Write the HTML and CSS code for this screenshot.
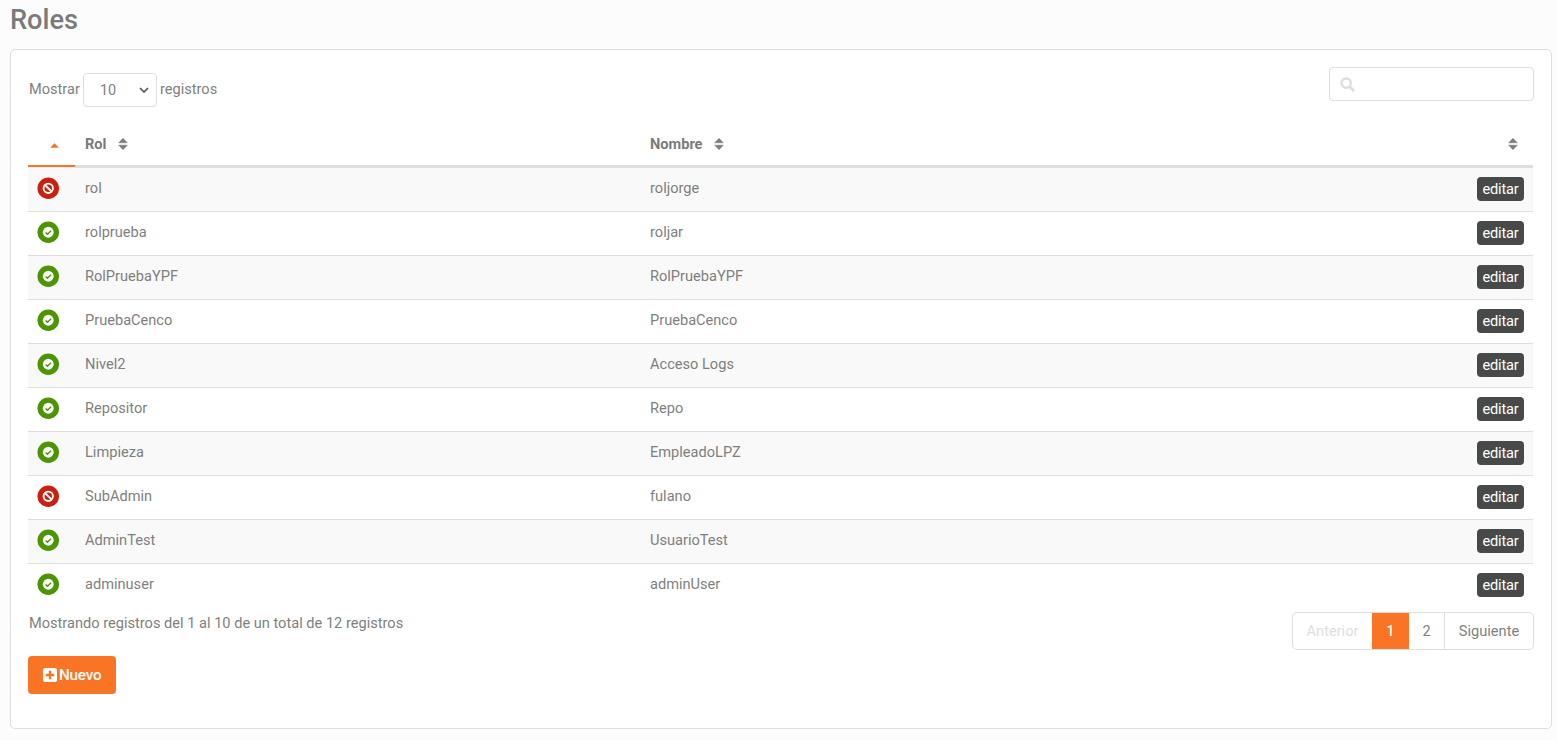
FILE: index.html
```html
<!DOCTYPE html>
<html lang="es">
<head>
<meta charset="utf-8">
<title>Roles</title>
<link rel="stylesheet" href="styles.css">
</head>
<body>
<svg class="defs" width="0" height="0" aria-hidden="true">
  <defs>
    <symbol id="ok" viewBox="0 0 24 24">
      <circle cx="12" cy="12" r="11.5" fill="#4b9500"/>
      <circle cx="12" cy="12" r="5.8" fill="#fff"/>
      <path d="M9.2 12.2l2 2 3.7-3.8" fill="none" stroke="#4b9500" stroke-width="1.4"/>
    </symbol>
    <symbol id="no" viewBox="0 0 24 24">
      <circle cx="12" cy="12" r="11.5" fill="#c9200f"/>
      <circle cx="12" cy="12" r="5" fill="none" stroke="#fff" stroke-width="2"/>
      <path d="M8.5 8.5l7 7" stroke="#fff" stroke-width="2"/>
    </symbol>
    <symbol id="sort" viewBox="0 0 10 12">
      <path d="M5 .3l4.3 4.5H.7zM5 11.7L.7 7.2h8.6z" fill="#7c7c7c" stroke="#7c7c7c" stroke-width=".5" stroke-linejoin="round"/>
    </symbol>
  </defs>
</svg>
<h1 class="title">Roles</h1>
<main class="card">
  <div class="top">
    <label class="length">Mostrar
      <span class="select">10
        <svg class="chev" viewBox="0 0 10 6" width="10" height="6"><path d="M1 1l4 4 4-4" fill="none" stroke="#555" stroke-width="1.7"/></svg>
      </span>
      registros</label>
    <div class="search">
      <svg viewBox="0 0 16 16" width="15" height="15"><circle cx="6.5" cy="6.5" r="5" fill="none" stroke="#dedede" stroke-width="2.6"/><path d="M10.5 10.5l4.5 4.5" stroke="#dedede" stroke-width="3"/></svg>
    </div>
  </div>
  <table class="grid">
    <colgroup><col class="c1"><col class="c2"><col class="c3"><col class="c4"></colgroup>
    <thead>
      <tr>
        <th class="sorted"><svg class="up" viewBox="0 0 10 5" width="9" height="5"><path d="M5 .4l4.2 4.2H.8z" fill="#f97425" stroke="#f97425" stroke-width=".6" stroke-linejoin="round"/></svg></th>
        <th>Rol<svg class="sort" width="10" height="12"><use href="#sort"/></svg></th>
        <th>Nombre<svg class="sort" width="10" height="12"><use href="#sort"/></svg></th>
        <th class="end"><svg class="sort" width="10" height="12"><use href="#sort"/></svg></th>
      </tr>
    </thead>
    <tbody>
      <tr><td class="st"><svg class="status"><use href="#no"/></svg></td><td>rol</td><td>roljorge</td><td class="end"><button class="edit">editar</button></td></tr>
      <tr><td class="st"><svg class="status"><use href="#ok"/></svg></td><td>rolprueba</td><td>roljar</td><td class="end"><button class="edit">editar</button></td></tr>
      <tr><td class="st"><svg class="status"><use href="#ok"/></svg></td><td>RolPruebaYPF</td><td>RolPruebaYPF</td><td class="end"><button class="edit">editar</button></td></tr>
      <tr><td class="st"><svg class="status"><use href="#ok"/></svg></td><td>PruebaCenco</td><td>PruebaCenco</td><td class="end"><button class="edit">editar</button></td></tr>
      <tr><td class="st"><svg class="status"><use href="#ok"/></svg></td><td>Nivel2</td><td>Acceso Logs</td><td class="end"><button class="edit">editar</button></td></tr>
      <tr><td class="st"><svg class="status"><use href="#ok"/></svg></td><td>Repositor</td><td>Repo</td><td class="end"><button class="edit">editar</button></td></tr>
      <tr><td class="st"><svg class="status"><use href="#ok"/></svg></td><td>Limpieza</td><td>EmpleadoLPZ</td><td class="end"><button class="edit">editar</button></td></tr>
      <tr><td class="st"><svg class="status"><use href="#no"/></svg></td><td>SubAdmin</td><td>fulano</td><td class="end"><button class="edit">editar</button></td></tr>
      <tr><td class="st"><svg class="status"><use href="#ok"/></svg></td><td>AdminTest</td><td>UsuarioTest</td><td class="end"><button class="edit">editar</button></td></tr>
      <tr><td class="st"><svg class="status"><use href="#ok"/></svg></td><td>adminuser</td><td>adminUser</td><td class="end"><button class="edit">editar</button></td></tr>
    </tbody>
  </table>
  <div class="foot">
    <div class="info">Mostrando registros del 1 al 10 de un total de 12 registros</div>
    <nav class="pager">
      <a class="pg prev">Anterior</a><a class="pg cur">1</a><a class="pg two">2</a><a class="pg next">Siguiente</a>
    </nav>
  </div>
  <button class="new">
    <svg viewBox="0 0 14 14" width="14" height="14"><rect width="14" height="14" rx="2" fill="#fff"/><path d="M7 2.8v8.4M2.8 7h8.4" stroke="#f97425" stroke-width="2.4"/></svg>
    Nuevo
  </button>
</main>
</body>
</html>
```

FILE: styles.css
```css
* { box-sizing: border-box; }
html, body { height: 100%; }
body {
  margin: 0;
  padding: 0 5px 0 10px;
  background: #fcfcfc;
  color: #7f7f7f;
  font-family: Roboto, sans-serif;
  font-size: 14.6px;
  overflow: hidden;
}
.defs { position: absolute; }
.title {
  margin: 0;
  height: 49px;
  padding-top: 4px;
  font-size: 27.2px;
  line-height: 32px;
  font-weight: 500;
  color: #7a7a7a;
}
.card {
  height: 680px;
  padding: 17px 17px 0;
  background: #fff;
  border: 1px solid #dedede;
  border-radius: 5px;
}
.top {
  display: flex;
  justify-content: space-between;
  align-items: flex-start;
  height: 55px;
}
.length {
  display: flex;
  align-items: center;
  gap: 3px;
  height: 37px;
  margin-top: 3px;
  padding-left: 1px;
}
.select {
  display: flex;
  align-items: center;
  justify-content: space-between;
  width: 74px;
  height: 34px;
  margin-top: 3px;
  padding: 0 7px 0 16px;
  border: 1px solid #dedede;
  border-radius: 4px;
  font-size: 14.4px;
}
.search {
  display: flex;
  align-items: center;
  width: 205px;
  height: 34px;
  padding-left: 10px;
  border: 1px solid #dedede;
  border-radius: 4px;
}
.grid {
  width: 1505px;
  table-layout: fixed;
  border-collapse: separate;
  border-spacing: 0;
}
.c1 { width: 47px; }
.c2 { width: 565px; }
.c3 { width: 564px; }
th {
  height: 46px;
  padding: 0 10px;
  text-align: left;
  color: #7a7a7a;
  font-size: 14.6px;
  font-weight: 700;
  border-bottom: 3px solid #dedede;
}
th.sorted {
  padding: 0 0 0 5px;
  text-align: center;
  border-bottom-color: transparent;
  background: linear-gradient(#f97425 2px, #eeeeee 2px) 0 100% / 100% 3px no-repeat border-box;
}
.up { vertical-align: 1px; }
.sort { margin-left: 12px; vertical-align: -1px; }
th.end { padding-right: 15px; text-align: right; }
th.end .sort { margin: 0; }
td {
  height: 44px;
  padding: 0 10px 4px;
  border-bottom: 1px solid #dedede;
}
tbody tr:nth-child(odd) { background: #f9f9f9; }
tbody tr:last-child td { border-bottom-color: transparent; }
td.st { padding: 0 0 2px 9px; }
.status { display: block; width: 22.5px; height: 22.5px; }
td.end { text-align: right; padding: 0 9px 1px 0; }
.edit {
  display: inline-block;
  height: 24px;
  width: 47px;
  padding: 0;
  border: 0;
  border-radius: 4px;
  background: #484a49;
  color: #fff;
  font: 14.6px Roboto, sans-serif;
  letter-spacing: -0.2px;
  vertical-align: middle;
}
.foot {
  display: flex;
  justify-content: space-between;
  align-items: flex-start;
  height: 44px;
  margin-top: 4px;
}
.info { margin: 2px 0 0 1px; }
.pager {
  display: flex;
  height: 38px;
  border: 1px solid #dedede;
  border-radius: 5px;
  overflow: hidden;
  text-align: center;
  line-height: 36px;
}
.pg { display: block; }
.prev { width: 79px; color: #dedede; }
.cur { width: 37px; margin: -1px 0; line-height: 38px; background: #f97425; color: #fff; font-weight: 500; }
.two { width: 36px; border-right: 1px solid #dedede; }
.next { width: 88px; }
.new {
  display: flex;
  align-items: center;
  gap: 2px;
  width: 88px;
  height: 38px;
  padding: 0 0 0 15px;
  border: 0;
  border-radius: 4px;
  background: #f97425;
  color: #fff;
  font: 500 15.2px Roboto, sans-serif;
  letter-spacing: -0.2px;
}
```
